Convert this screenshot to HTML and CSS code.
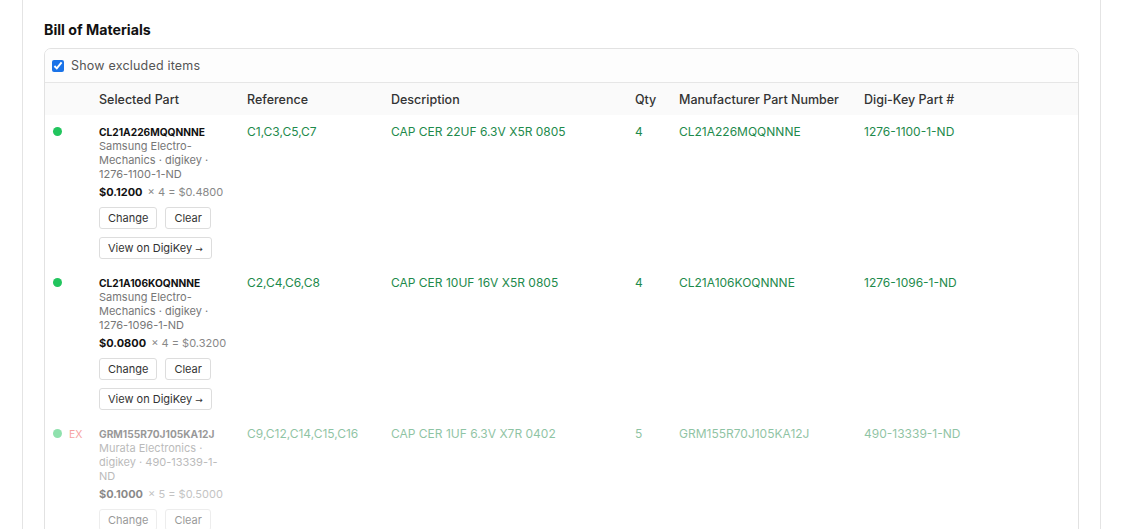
FILE: index.html
```html
<!DOCTYPE html>
<html lang="en">
<head>
    <meta charset="UTF-8">
    <title>Bill of Materials</title>
    <link rel="stylesheet" href="styles.css">
</head>
<body>
    <div class="panel">
        <h2 class="bom-title">Bill of Materials</h2>
        <div class="bom">
            <label class="bom-toolbar">
                <input type="checkbox" checked>
                <span>Show excluded items</span>
            </label>
            <table class="bom-table">
                <colgroup>
                    <col class="c-status">
                    <col class="c-part">
                    <col class="c-ref">
                    <col class="c-desc">
                    <col class="c-qty">
                    <col class="c-mpn">
                    <col>
                </colgroup>
                <thead>
                    <tr>
                        <th></th>
                        <th>Selected Part</th>
                        <th>Reference</th>
                        <th>Description</th>
                        <th>Qty</th>
                        <th>Manufacturer Part Number</th>
                        <th>Digi-Key Part #</th>
                    </tr>
                </thead>
                <tbody>
                    <tr>
                        <td><span class="dot"></span></td>
                        <td>
                            <div class="part-name">CL21A226MQQNNNE</div>
                            <div class="part-meta">Samsung Electro-<br>Mechanics · digikey ·<br>1276-1100-1-ND</div>
                            <div class="part-price"><b>$0.1200</b> <span>× 4 = $0.4800</span></div>
                            <div class="part-actions">
                                <button>Change</button>
                                <button>Clear</button>
                            </div>
                            <div class="part-actions">
                                <button>View on DigiKey <span class="arrow">→</span></button>
                            </div>
                        </td>
                        <td>C1,C3,C5,C7</td>
                        <td>CAP CER 22UF 6.3V X5R 0805</td>
                        <td>4</td>
                        <td>CL21A226MQQNNNE</td>
                        <td>1276-1100-1-ND</td>
                    </tr>
                    <tr>
                        <td><span class="dot"></span></td>
                        <td>
                            <div class="part-name">CL21A106KOQNNNE</div>
                            <div class="part-meta">Samsung Electro-<br>Mechanics · digikey ·<br>1276-1096-1-ND</div>
                            <div class="part-price"><b>$0.0800</b> <span>× 4 = $0.3200</span></div>
                            <div class="part-actions">
                                <button>Change</button>
                                <button>Clear</button>
                            </div>
                            <div class="part-actions">
                                <button>View on DigiKey <span class="arrow">→</span></button>
                            </div>
                        </td>
                        <td>C2,C4,C6,C8</td>
                        <td>CAP CER 10UF 16V X5R 0805</td>
                        <td>4</td>
                        <td>CL21A106KOQNNNE</td>
                        <td>1276-1096-1-ND</td>
                    </tr>
                    <tr class="excluded">
                        <td><span class="dot"></span><span class="ex">EX</span></td>
                        <td>
                            <div class="part-name">GRM155R70J105KA12J</div>
                            <div class="part-meta">Murata Electronics ·<br>digikey · 490-13339-1-<br>ND</div>
                            <div class="part-price"><b>$0.1000</b> <span>× 5 = $0.5000</span></div>
                            <div class="part-actions">
                                <button>Change</button>
                                <button>Clear</button>
                            </div>
                            <div class="part-actions">
                                <button>View on DigiKey <span class="arrow">→</span></button>
                            </div>
                        </td>
                        <td>C9,C12,C14,C15,C16</td>
                        <td>CAP CER 1UF 6.3V X7R 0402</td>
                        <td>5</td>
                        <td>GRM155R70J105KA12J</td>
                        <td>490-13339-1-ND</td>
                    </tr>
                </tbody>
            </table>
        </div>
    </div>
</body>
</html>
```

FILE: styles.css
```css
/* BOM panel */
body {
    margin: 0;
    background: #fff;
    font-family: Inter, "Noto Sans", sans-serif;
    color: #222;
}
.panel {
    margin: -1px 20px 0 22px;
    padding: 22px 21px 0 21px;
    border: 1px solid #e4e4e4;
    border-top: 0;
    min-height: 600px;
}
.bom-title {
    margin: 0 0 9px;
    font-size: 14.2px;
    font-weight: 700;
    line-height: 18px;
    color: #111;
}
.bom {
    border: 1px solid #e2e2e2;
    border-radius: 7px;
    overflow: hidden;
}
.bom-toolbar {
    display: flex;
    align-items: center;
    gap: 7px;
    height: 33px;
    padding: 0 7px;
    background: #fdfdfd;
    border-bottom: 1px solid #e6e6e6;
    font-size: 12.5px;
    letter-spacing: 0.2px;
    color: #555;
}
.bom-toolbar input {
    margin: 0;
    width: 12px;
    height: 12px;
    accent-color: #1a73e8;
}
.bom-table {
    width: 100%;
    border-collapse: collapse;
    table-layout: fixed;
}
.c-status { width: 46px; }
.c-part { width: 148px; }
.c-ref { width: 144px; }
.c-desc { width: 244px; }
.c-qty { width: 44px; }
.c-mpn { width: 185px; }
.bom-table th {
    height: 32px;
    padding: 0 8px;
    background: #fafafa;
    text-align: left;
    font-size: 12.5px;
    font-weight: 500;
    color: #333;
}
.bom-table td {
    padding: 10px 8px 7px;
    vertical-align: top;
    font-size: 12px;
    line-height: 14px;
    color: #1e8a4c;
}
.dot {
    display: inline-block;
    width: 9px;
    height: 9px;
    margin: 2px 0 0 0;
    border-radius: 50%;
    background: #22c55e;
    vertical-align: top;
}
.ex {
    margin-left: 7px;
    font-size: 10.5px;
    color: #ef4444;
}
.part-name {
    font-size: 10.2px;
    font-weight: 700;
    color: #111;
}
.part-meta {
    font-size: 11px;
    color: #777;
}
.part-price {
    margin-top: 4px;
    font-size: 11px;
    color: #888;
}
.part-price b {
    color: #111;
    margin-right: 2px;
}
.part-actions {
    display: flex;
    gap: 8px;
    margin-top: 8px;
}
.part-actions + .part-actions {
    margin-top: 8px;
}
.part-actions button {
    height: 22px;
    padding: 0 8px;
    border: 1px solid #ddd;
    border-radius: 3px;
    background: #fff;
    font-family: inherit;
    font-size: 11px;
    color: #333;
}
.arrow {
    font-family: "DejaVu Sans", sans-serif;
    font-size: 9px;
}
.excluded td {
    opacity: 0.5;
}
.excluded .part-name {
    color: #333;
}
```
